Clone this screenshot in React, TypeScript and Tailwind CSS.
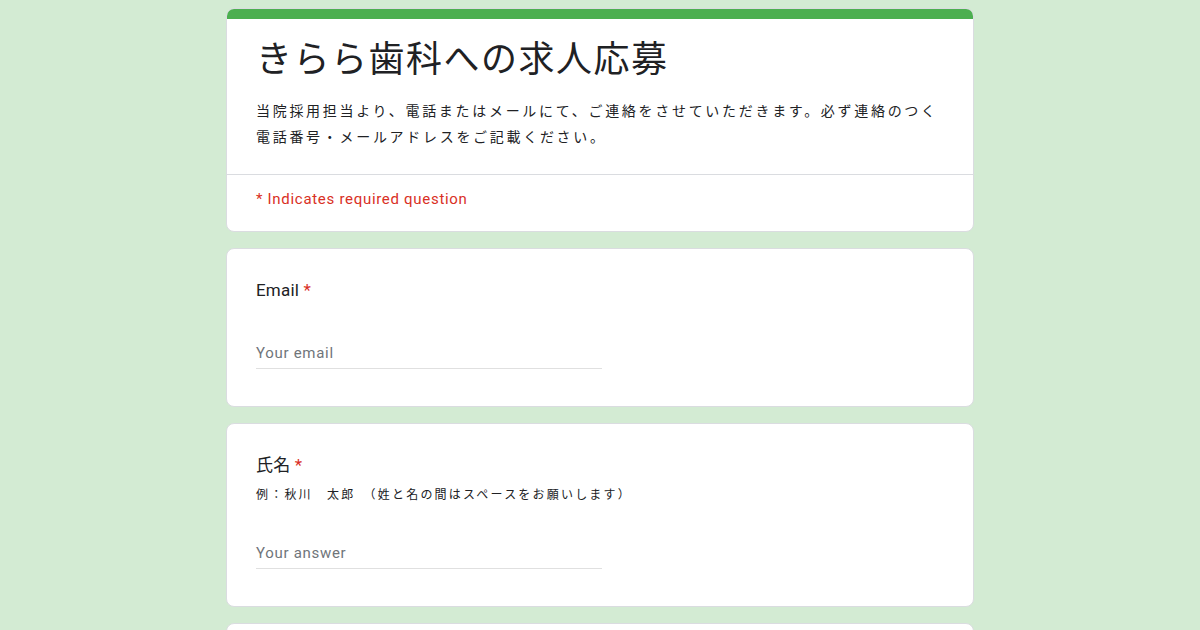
const jp = { fontFamily: '"Noto Sans CJK JP", "Noto Sans", sans-serif' }
const ro = { fontFamily: 'Roboto, "Noto Sans CJK JP", sans-serif' }

function Question({ label, hint, placeholder }: { label: string; hint?: string; placeholder: string }) {
  return (
    <div className="bg-white rounded-lg border border-[#dadce0] px-[29px] pt-[29px] pb-[37px]">
      <div className="text-[17px] leading-6 text-[#202124] tracking-[0.2px]" style={ro}>
        {label} <span className="text-[#d93025]">*</span>
      </div>
      {hint && (
        <div className="text-[12px] leading-[18px] mt-2 text-[#202124] tracking-[2.2px]" style={jp}>
          {hint}
        </div>
      )}
      <div className={hint ? "mt-10" : "mt-[41px]"}>
        <div className="w-[346px] border-b border-[#e0e0e0] pb-[5px] text-[15px] leading-5 text-[#70757a] tracking-[0.7px]" style={ro}>
          {placeholder}
        </div>
      </div>
    </div>
  )
}

export default function App() {
  return (
    <div className="min-h-screen bg-[#d3ebd3] pt-2">
      <div className="w-[748px] mx-auto flex flex-col gap-4">
        <div className="bg-white rounded-lg border border-[#dadce0] overflow-hidden">
          <div className="h-[10px] bg-[#4caf50]" />
          <div className="px-[29px] pt-[14px] pb-[25px]">
            <h1 className="text-[36px] leading-[46px] text-[#202124] tracking-[1.5px]" style={jp}>
              きらら歯科への求人応募
            </h1>
            <p className="mt-[18px] text-[14px] leading-[26px] text-[#202124] tracking-[2.7px]" style={jp}>
              当院採用担当より、電話またはメールにて、ご連絡をさせていただきます。必ず連絡のつく電話番号・メールアドレスをご記載ください。
            </p>
          </div>
          <div className="border-t border-[#dadce0] px-[29px] pt-[14px] pb-[22px]">
            <div className="text-[15px] leading-5 text-[#d93025] tracking-[0.7px]" style={ro}>
              * Indicates required question
            </div>
          </div>
        </div>
        <Question label="Email" placeholder="Your email" />
        <Question label="氏名" hint="例：秋川　太郎　（姓と名の間はスペースをお願いします）" placeholder="Your answer" />
        <div className="bg-white rounded-lg border border-[#dadce0] h-[160px]" />
      </div>
    </div>
  )
}
